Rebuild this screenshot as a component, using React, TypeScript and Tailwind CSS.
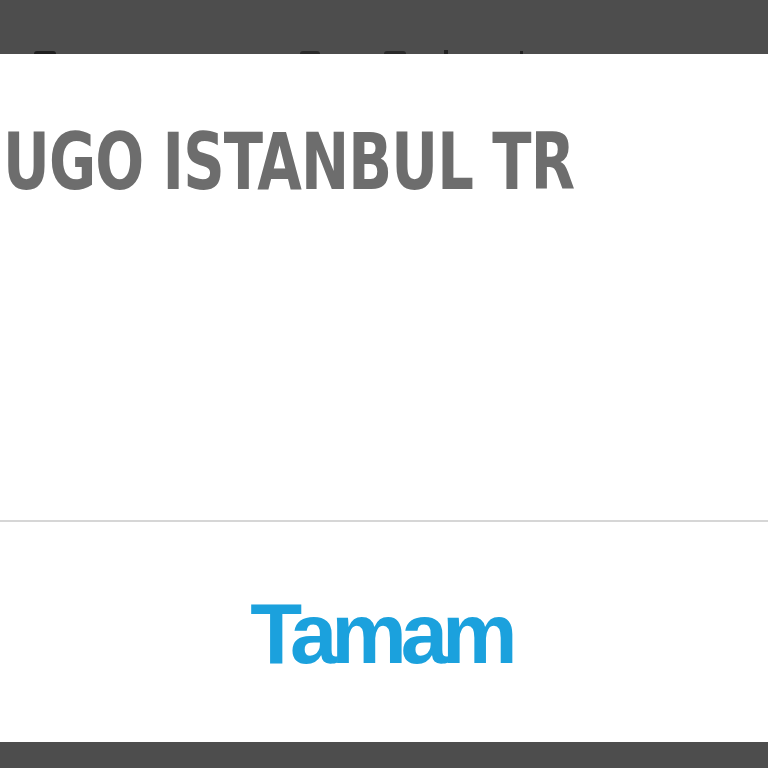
export default function App() {
  return (
    <div className="flex h-[768px] w-[768px] flex-col overflow-hidden bg-[#4d4d4d]">
      {/* arka plandaki metnin dialog altında kalan uçları */}
      <div className="flex h-[54px] shrink-0 items-end">
        <span className="ml-[34px] h-[3px] w-[22px] rounded-t-full bg-[#1f1f1f]" />
        <span className="ml-[244px] h-[3px] w-[20px] rounded-t-full bg-[#2a2a2a]" />
        <span className="ml-[64px] h-[3px] w-[22px] rounded-t-full bg-[#2a2a2a]" />
        <span className="ml-[38px] h-[4px] w-[4px] bg-[#222]" />
        <span className="ml-[72px] h-[3px] w-[3px] bg-[#222]" />
      </div>

      <div className="flex h-[688px] shrink-0 flex-col bg-white">
        <div className="h-[466px] shrink-0 pl-[3px] pt-[69px]">
          <p
            className="origin-left scale-x-[0.82] whitespace-nowrap text-[78px] leading-none font-bold tracking-[-1px] text-[#6d6d6d]"
            style={{ fontFamily: '"DejaVu Sans Condensed", "DejaVu Sans", sans-serif' }}
          >
            UGO ISTANBUL TR
          </p>
        </div>
        <div className="h-[2px] shrink-0 bg-[#d6d6d6]" />
        <button className="flex flex-1 items-center justify-center pt-[2px] pr-[6px]">
          <span className="font-['Liberation_Sans',Arial,sans-serif] text-[85px] leading-none font-bold tracking-[-6px] text-[#1ba1dd]">
            Tamam
          </span>
        </button>
      </div>
    </div>
  );
}
